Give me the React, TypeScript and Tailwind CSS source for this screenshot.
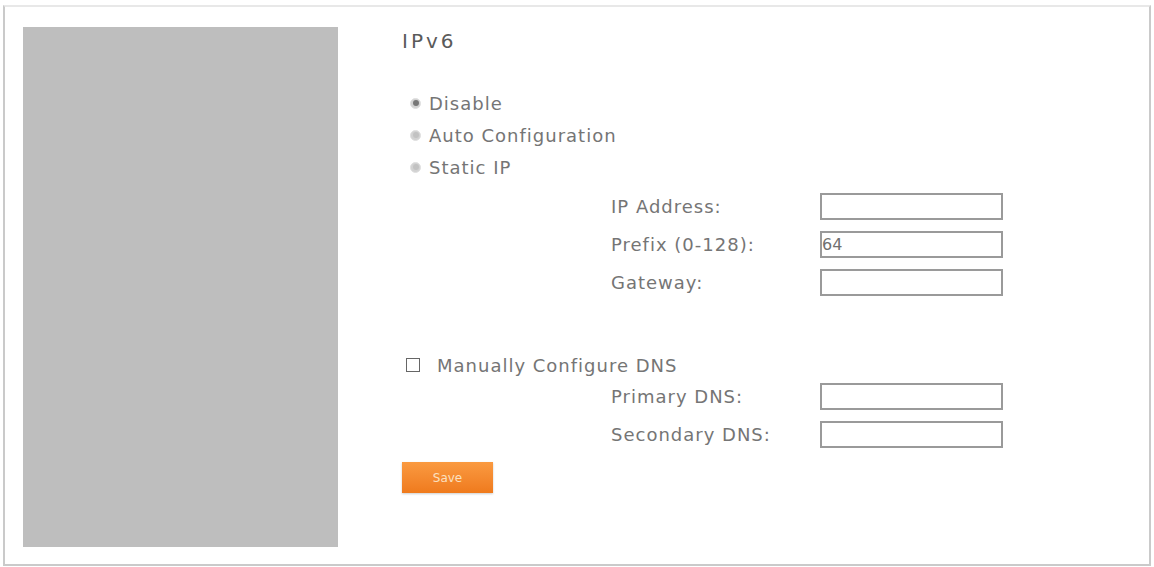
import React from "react";

const font = { fontFamily: '"DejaVu Sans", Verdana, sans-serif' };

function Radio({ checked, label }: { checked?: boolean; label: string }) {
  return (
    <div className="flex h-[32px] items-center">
      <span className="ml-[8px] flex h-[11px] w-[11px] items-center justify-center rounded-full border border-[#e0e0e0] bg-[#d2d2d2]">
        <span
          className={
            checked
              ? "h-[6px] w-[6px] rounded-full bg-[#777777]"
              : "h-[6px] w-[6px] rounded-full bg-[#c2c2c2]"
          }
        />
      </span>
      <span className="ml-[8px] text-[18px] tracking-[1px] text-[#757575]">{label}</span>
    </div>
  );
}

function Field({ label, value }: { label: string; value?: string }) {
  return (
    <div className="flex h-[27px] items-center">
      <span className="ml-[209px] w-[209px] text-[18px] tracking-[1px] text-[#757575]">{label}</span>
      <div className="flex h-[27px] w-[183px] items-center border-2 border-[#9a9a9a] bg-white">
        {value ? (
          <span className="text-[16px] leading-none text-[#707070]">{value}</span>
        ) : null}
      </div>
    </div>
  );
}

export default function App() {
  return (
    <div className="h-[567px] w-[1154px] bg-white pl-[3px] pt-[5px]" style={font}>
      <div className="flex h-[561px] w-[1148px] border-2 border-[#cacaca] border-t-[#e8e8e8] pl-[18px] pt-[20px]">
        <div className="h-[520px] w-[315px] bg-[#bebebe]" />
        <div className="ml-[64px] flex flex-col">
          <div className="h-[28px] text-[20px] leading-[28px] tracking-[3px] text-[#5a5a5a]">IPv6</div>
          <div className="mt-[32px] flex flex-col">
            <Radio checked label="Disable" />
            <Radio label="Auto Configuration" />
            <Radio label="Static IP" />
          </div>
          <div className="mt-[10px] flex flex-col gap-[11px]">
            <Field label="IP Address:" />
            <Field label="Prefix (0-128):" value="64" />
            <Field label="Gateway:" />
          </div>
          <div className="mt-[57px] flex h-[24px] items-center">
            <span className="ml-[4px] h-[14px] w-[14px] border-[1.5px] border-[#666] bg-white" />
            <span className="ml-[17px] text-[18px] tracking-[1px] text-[#757575]">
              Manually Configure DNS
            </span>
          </div>
          <div className="mt-[6px] flex flex-col gap-[11px]">
            <Field label="Primary DNS:" />
            <Field label="Secondary DNS:" />
          </div>
          <button className="mt-[14px] flex h-[31px] w-[91px] items-center justify-center bg-gradient-to-b from-[#fa9a40] to-[#ef7a1c] text-[12px] text-[#fbe0c0] shadow-[0_1px_2px_rgba(0,0,0,0.2)]">
            Save
          </button>
        </div>
      </div>
    </div>
  );
}
